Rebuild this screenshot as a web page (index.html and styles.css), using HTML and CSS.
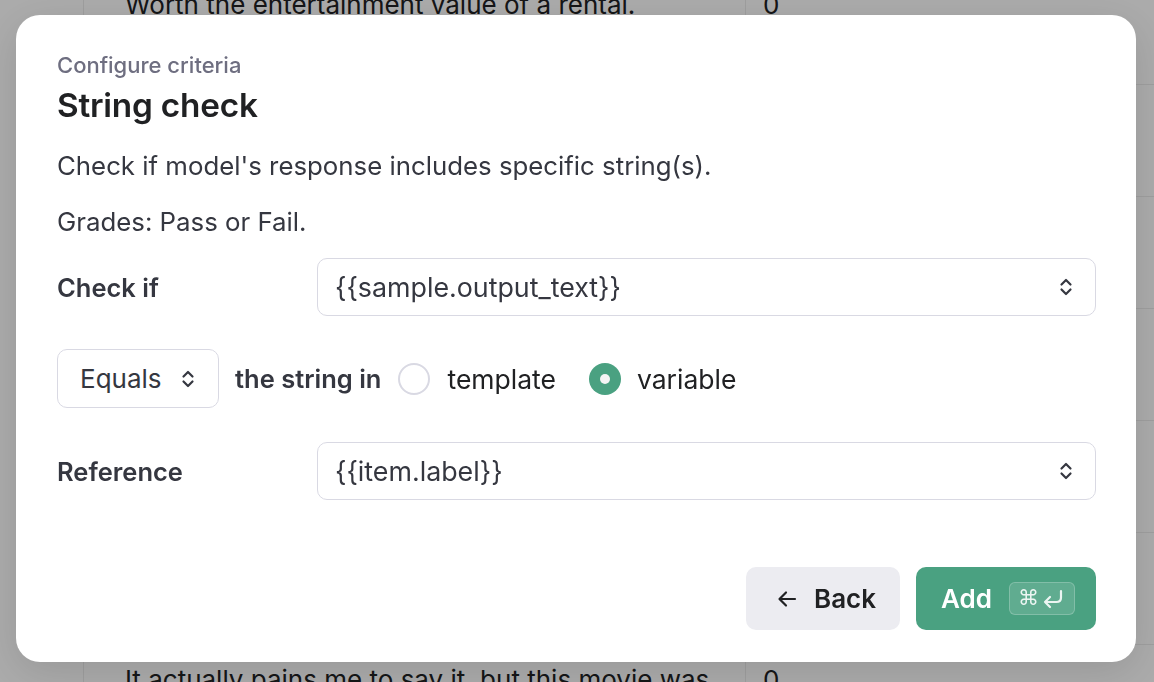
FILE: index.html
```html
<!DOCTYPE html>
<html lang="en">
<head>
<meta charset="utf-8">
<title>String check</title>
<link rel="stylesheet" href="styles.css">
</head>
<body>
<div class="page">
  <div class="table">
    <div class="row"><div class="cell text">Worth the entertainment value of a rental.</div><div class="cell score">0</div></div>
    <div class="row"><div class="cell text"></div><div class="cell score"></div></div>
    <div class="row"><div class="cell text"></div><div class="cell score"></div></div>
    <div class="row"><div class="cell text"></div><div class="cell score"></div></div>
    <div class="row"><div class="cell text"></div><div class="cell score"></div></div>
    <div class="row"><div class="cell text"></div><div class="cell score"></div></div>
    <div class="row"><div class="cell text">It actually pains me to say it, but this movie was</div><div class="cell score">0</div></div>
  </div>
</div>
<div class="overlay"></div>
<div class="modal">
  <div class="eyebrow">Configure criteria</div>
  <h1 class="title">String check</h1>
  <p class="desc first">Check if model's response includes specific string(s).</p>
  <p class="desc">Grades: Pass or Fail.</p>

  <div class="field-row check-row">
    <div class="label">Check if</div>
    <div class="select wide">
      <span class="value">{{sample.output_text}}</span>
      <svg class="chev" width="14" height="22" viewBox="0 0 14 22"><path d="M2.5 8.5 L7 4 L11.5 8.5 M2.5 13.5 L7 18 L11.5 13.5" fill="none" stroke="#353740" stroke-width="2.2" stroke-linecap="round" stroke-linejoin="round"/></svg>
    </div>
  </div>

  <div class="op-row">
    <div class="select small">
      <span class="value">Equals</span>
      <svg class="chev" width="14" height="22" viewBox="0 0 14 22"><path d="M2.5 8.5 L7 4 L11.5 8.5 M2.5 13.5 L7 18 L11.5 13.5" fill="none" stroke="#353740" stroke-width="2.2" stroke-linecap="round" stroke-linejoin="round"/></svg>
    </div>
    <span class="label inline">the string in</span>
    <span class="radio"></span>
    <span class="radio-label">template</span>
    <span class="radio checked"><span class="dot"></span></span>
    <span class="radio-label">variable</span>
  </div>

  <div class="field-row ref-row">
    <div class="label">Reference</div>
    <div class="select wide">
      <span class="value">{{item.label}}</span>
      <svg class="chev" width="14" height="22" viewBox="0 0 14 22"><path d="M2.5 8.5 L7 4 L11.5 8.5 M2.5 13.5 L7 18 L11.5 13.5" fill="none" stroke="#353740" stroke-width="2.2" stroke-linecap="round" stroke-linejoin="round"/></svg>
    </div>
  </div>

  <div class="actions">
    <button class="btn back">
      <svg width="22" height="22" viewBox="0 0 22 22"><path d="M19 11 H4 M10 4.5 L3.5 11 L10 17.5" fill="none" stroke="#202123" stroke-width="2.2" stroke-linecap="round" stroke-linejoin="round"/></svg>
      <span>Back</span>
    </button>
    <button class="btn add">
      <span>Add</span>
      <span class="kbd"><span class="cmd">⌘</span><svg width="26" height="22" viewBox="0 0 26 22"><path d="M21 3 V9.5 Q21 14 16.5 14 H5 M10 9 L5 14 L10 19" fill="none" stroke="#ffffff" stroke-opacity="0.88" stroke-width="2.2" stroke-linecap="round" stroke-linejoin="round"/></svg></span>
    </button>
  </div>
</div>
</body>
</html>
```

FILE: styles.css
```css
* { box-sizing: border-box; }
html, body { margin: 0; padding: 0; }
body {
  width: 1154px;
  height: 682px;
  overflow: hidden;
  background: #ffffff;
  font-family: Inter, "Noto Sans", "Liberation Sans", sans-serif;
  color: #202123;
}

.page {
  height: 682px;
  overflow: hidden;
}
.table {
  margin-top: -27px;
  margin-left: 83px;
  border-left: 1px solid #ececec;
}
.row {
  display: flex;
  height: 112px;
  border-bottom: 1px solid #ececec;
}
.cell {
  font-size: 26px;
  color: #202123;
  line-height: 30px;
  white-space: nowrap;
}
.cell.text {
  width: 662px;
  padding: 20px 0 0 41px;
  border-right: 1px solid #ececec;
}
.row:first-child .cell { padding-top: 17px; }
.cell.score {
  padding: 20px 0 0 17px;
}

.overlay {
  position: fixed;
  inset: 0;
  background: rgba(0, 0, 0, 0.33);
}

.modal {
  position: fixed;
  left: 16px;
  top: 15px;
  width: 1120px;
  height: 647px;
  background: #ffffff;
  border-radius: 24px;
  padding: 40px 40px 0 41px;
  box-shadow: 0 10px 40px rgba(0, 0, 0, 0.12);
}

.eyebrow {
  font-size: 22px;
  line-height: 20px;
  font-weight: 500;
  color: #6e6e80;
}
.title {
  margin: 12px 0 0;
  font-size: 33.3px;
  line-height: 36px;
  font-weight: 600;
  color: #202123;
  letter-spacing: -0.2px;
}
.desc {
  margin: 28px 0 0;
  font-size: 25.8px;
  line-height: 28px;
  color: #353740;
}
.desc.first { margin-top: 29px; }

.field-row {
  display: grid;
  grid-template-columns: 260px 1fr;
  align-items: center;
}
.check-row { margin-top: 22px; }
.ref-row { margin-top: 34px; }

.label {
  font-size: 25.5px;
  font-weight: 600;
  color: #353740;
}

.select {
  display: flex;
  align-items: center;
  justify-content: space-between;
  border: 1.5px solid #d9d9e3;
  border-radius: 10px;
  background: #ffffff;
  font-size: 26.8px;
  color: #353740;
}
.select.wide {
  height: 58px;
  padding: 0 22px 0 17px;
}
.select.small {
  width: 162px;
  height: 59px;
  padding: 0 23px 0 22px;
  font-size: 26px;
}

.op-row {
  display: flex;
  align-items: center;
  margin-top: 33px;
}
.label.inline { margin-left: 16px; }
.radio {
  width: 32px;
  height: 32px;
  border-radius: 50%;
  border: 2px solid #d9d9e3;
  margin-left: 17px;
  display: flex;
  align-items: center;
  justify-content: center;
  flex-shrink: 0;
}
.radio.checked {
  border: none;
  background: #4aa181;
  margin-left: 33px;
}
.radio .dot {
  width: 10px;
  height: 10px;
  border-radius: 50%;
  background: #f4f4f4;
}
.radio-label {
  margin-left: 17px;
  font-size: 26.5px;
  color: #202123;
}
.radio.checked + .radio-label { margin-left: 16px; }

.actions {
  display: flex;
  justify-content: flex-end;
  gap: 16px;
  margin-top: 67px;
}
.btn {
  height: 63px;
  border: none;
  border-radius: 10px;
  display: flex;
  align-items: center;
  font-family: inherit;
  font-size: 26px;
  font-weight: 600;
  cursor: pointer;
}
.btn.back {
  width: 154px;
  background: #ececf1;
  color: #202123;
  padding: 0 0 0 30px;
  gap: 16px;
}
.btn.add {
  width: 180px;
  background: #4aa181;
  color: #ffffff;
  padding: 0 0 0 25px;
  gap: 17px;
}
.kbd {
  display: flex;
  align-items: center;
  justify-content: center;
  gap: 1px;
  width: 66px;
  height: 33px;
  border-radius: 6px;
  border: 1px solid rgba(255, 255, 255, 0.22);
  background: rgba(255, 255, 255, 0.12);
}
.cmd {
  font-family: "DejaVu Sans", sans-serif;
  font-size: 21px;
  font-weight: 400;
  line-height: 1;
  color: rgba(255, 255, 255, 0.88);
}
```
